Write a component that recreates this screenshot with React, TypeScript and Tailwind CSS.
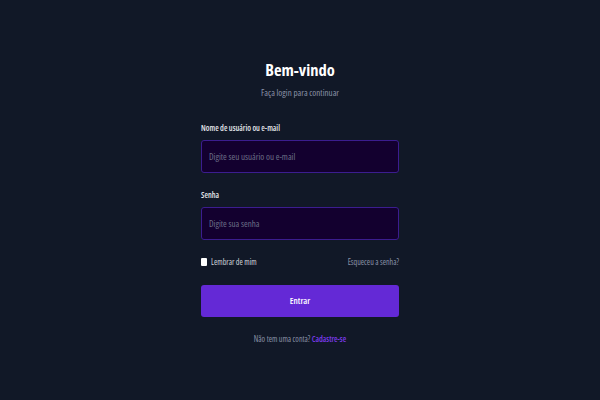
import React from 'react';

export default function App() {
    return (
        <div
            className="min-h-screen w-full bg-[#111827] flex justify-center [font-stretch:75%]"
            style={{ fontFamily: '"Open Sans", "Liberation Sans", sans-serif' }}
        >
            <div className="w-[198px] pt-[58px]">
                {/* Header */}
                <div className="text-center">
                    <h1 className="text-[16.5px] leading-[24px] font-bold text-white">Bem-vindo</h1>
                    <p className="mt-[5px] text-[9px] leading-[12px] text-[#8b93a7]">Faça login para continuar</p>
                </div>

                {/* Username */}
                <div className="mt-[23px]">
                    <label className="block text-[8px] leading-[12px] font-semibold text-[#e5e7eb]">Nome de usuário ou e-mail</label>
                    <input
                        type="text"
                        placeholder="Digite seu usuário ou e-mail"
                        className="mt-[6px] w-full h-[33px] rounded-[3px] border border-[#3b1d8f] bg-[#13002f] px-[7px] text-[9px] text-white placeholder:text-[#6b6f86] outline-none"
                    />
                </div>

                {/* Password */}
                <div className="mt-[16px]">
                    <label className="block text-[8px] leading-[12px] font-semibold text-[#e5e7eb]">Senha</label>
                    <input
                        type="password"
                        placeholder="Digite sua senha"
                        className="mt-[6px] w-full h-[33px] rounded-[3px] border border-[#3b1d8f] bg-[#13002f] px-[7px] text-[9px] text-white placeholder:text-[#6b6f86] outline-none"
                    />
                </div>

                {/* Remember / forgot */}
                <div className="mt-[16px] flex items-center justify-between">
                    <label className="flex items-center gap-[4px] text-[8px] leading-[12px] text-[#d1d5db]">
                        <span className="inline-block w-[6px] h-[8px] bg-white rounded-[1px]"></span>
                        Lembrar de mim
                    </label>
                    <a className="text-[8px] leading-[12px] text-[#8b93a7]">Esqueceu a senha?</a>
                </div>

                {/* Submit */}
                <button className="mt-[17px] w-full h-[32px] rounded-[3px] bg-[#6429d6] text-[9px] font-semibold text-white">
                    Entrar
                </button>

                <p className="mt-[16px] text-center text-[8px] leading-[12px] text-[#8b93a7]">
                    Não tem uma conta? <span className="text-[#7c3aed] font-semibold">Cadastre-se</span>
                </p>
            </div>
        </div>
    );
}
